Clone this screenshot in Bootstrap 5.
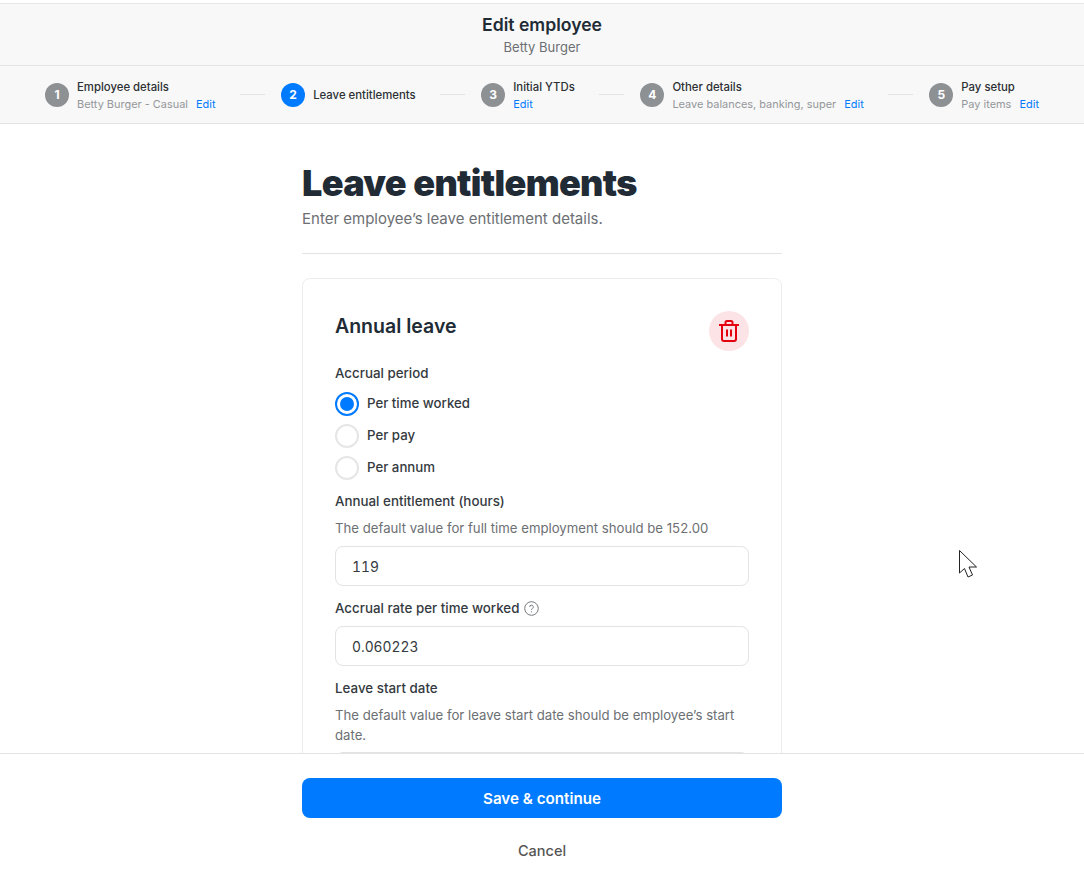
<!DOCTYPE html>
<html lang="en">
<head>
<meta charset="utf-8">
<title>Edit employee</title>
<link href="https://cdn.jsdelivr.net/npm/bootstrap@5.3.0/dist/css/bootstrap.min.css" rel="stylesheet">
<style>
html,body{height:100%;overflow:hidden}
body{font-family:Inter,"Noto Sans",sans-serif;color:#212529;background:#fff}
.shell{height:882px;padding-top:3px}
.topband{background:#f8f8f8;border-top:1px solid #e6e6e6;border-bottom:1px solid #e3e3e3;height:63px;padding-top:9px;text-align:center}
.topband h1{font-size:17.6px;font-weight:600;line-height:24px;margin:0;color:#212b35}
.topband p{font-size:13px;line-height:20px;color:#6c6f73;margin:0}
.stepbar{background:#f8f8f8;border-bottom:1px solid #e3e3e3;height:58px;padding:0 45px 0 45px}
.stepdot{width:24px;height:24px;border-radius:50%;background:#8e9194;color:#fff;font-size:12px;font-weight:700;flex:none}
.stepdot.on{background:#007bff}
.steptext{padding-top:2px}
.stepname{font-size:11.35px;line-height:17px;font-weight:500;color:#2c3034;white-space:nowrap}
.stepsub{font-size:10.95px;line-height:17px;color:#94979a;white-space:nowrap}
.stepsub a{color:#007bff;text-decoration:none;margin-left:5px}
.stepsub a.lone{margin-left:0}
.steprule{width:25px;height:1px;background:#e3e3e3;flex:none;margin-left:8px}
.scrollarea{overflow:hidden;height:629px}
.narrow{width:480px;margin:0 auto}
.pagetitle{font-size:36px;font-weight:900;line-height:44px;margin:37px 0 0;letter-spacing:-.7px;word-spacing:1px;color:#212b35}
.pagesub{font-size:15px;line-height:24px;color:#6c6f73;margin:2px 0 0}
.splitline{border-top:1px solid #e3e3e3;margin:22px 0 24px}
.leavecard{border:1px solid #ededed;border-radius:8px;padding:32px 32px 40px}
.leavecard h2{font-size:19.5px;font-weight:600;line-height:30px;margin:0;color:#212b35}
.binbtn{width:40px;height:40px;border-radius:50%;background:#fce4e6;border:0;padding:0}
.fieldlabel{font-size:13.35px;font-weight:500;line-height:20px;color:#343a40;margin:0}
.fieldlabel svg{margin-left:1px}
.hinttext{font-size:13.2px;line-height:20px;color:#6c6f73;margin:0}
.radiorow{height:24px;margin-top:8px;font-size:13.25px;font-weight:500;color:#343a40;gap:8px}
.radioring{width:24px;height:24px;border-radius:50%;border:2px solid #e6e6e6;flex:none;background:#fff}
.radioring.on{border-color:#007bff;position:relative}
.radioring.on::after{content:"";position:absolute;inset:3px;border-radius:50%;background:#007bff}
.valuebox.form-control{height:40px;border:1px solid #e3e3e3;border-radius:8px;font-size:13.8px;padding:2px 16px 0;color:#343a40;box-shadow:none;font-feature-settings:"tnum"}
.footerbar{border-top:1px solid #e3e3e3;height:129px;background:#fff;padding-top:24px}
.savebtn.btn{display:block;width:100%;height:40px;background:#007bff;border:0;border-radius:8px;font-size:15.2px;font-weight:600;color:#fff;padding:2px 0 0}
.cancelbtn.btn{display:block;width:100%;font-size:14.5px;font-weight:500;color:#555;border:0;padding:0;margin-top:21px;line-height:24px}
.cursormark{position:absolute;left:958px;top:549px;width:21px;height:29px}
.gap-a{margin-top:12px}.gap-b{margin-top:9px}.gap-c{margin-top:7px}.gap-d{margin-top:8px}.gap-e{margin-top:11px}
.date-input{margin-top:7px}
</style>
</head>
<body>
<div class="shell">
  <header class="topband">
    <h1>Edit employee</h1>
    <p>Betty Burger</p>
  </header>
  <nav class="stepbar d-flex align-items-center justify-content-between">
    <div class="d-flex align-items-center gap-2">
      <span class="stepdot d-flex align-items-center justify-content-center">1</span>
      <div class="steptext"><div class="stepname">Employee details</div><div class="stepsub">Betty Burger - Casual <a href="#">Edit</a></div></div>
    </div>
    <span class="steprule"></span>
    <div class="d-flex align-items-center gap-2">
      <span class="stepdot on d-flex align-items-center justify-content-center">2</span>
      <div class="steptext"><div class="stepname">Leave entitlements</div></div>
    </div>
    <span class="steprule"></span>
    <div class="d-flex align-items-center gap-2">
      <span class="stepdot d-flex align-items-center justify-content-center">3</span>
      <div class="steptext"><div class="stepname">Initial YTDs</div><div class="stepsub"><a class="lone" href="#">Edit</a></div></div>
    </div>
    <span class="steprule"></span>
    <div class="d-flex align-items-center gap-2">
      <span class="stepdot d-flex align-items-center justify-content-center">4</span>
      <div class="steptext"><div class="stepname">Other details</div><div class="stepsub">Leave balances, banking, super <a href="#">Edit</a></div></div>
    </div>
    <span class="steprule"></span>
    <div class="d-flex align-items-center gap-2">
      <span class="stepdot d-flex align-items-center justify-content-center">5</span>
      <div class="steptext"><div class="stepname">Pay setup</div><div class="stepsub">Pay items <a href="#">Edit</a></div></div>
    </div>
  </nav>
  <main class="scrollarea">
    <div class="narrow">
      <h2 class="pagetitle">Leave entitlements</h2>
      <p class="pagesub">Enter employee’s leave entitlement details.</p>
      <div class="splitline"></div>
      <section class="leavecard">
        <div class="d-flex justify-content-between align-items-start">
          <h2>Annual leave</h2>
          <button class="binbtn d-flex align-items-center justify-content-center" type="button" aria-label="Delete">
            <svg width="20" height="22" viewBox="0 0 20 22" fill="none" stroke="#e3000f" stroke-width="2"><path d="M0 5h20M6.500 5V2.500A1.500 1.500 0 0 1 8 1h4a1.500 1.500 0 0 1 1.500 1.500V5M3 5v14a2 2 0 0 0 2 2h10a2 2 0 0 0 2-2V5M8 9.500v7M12 9.500v7"/></svg>
          </button>
        </div>
        <p class="fieldlabel gap-a">Accrual period</p>
        <div class="radiorow d-flex align-items-center gap-b"><span class="radioring on"></span>Per time worked</div>
        <div class="radiorow d-flex align-items-center"><span class="radioring"></span>Per pay</div>
        <div class="radiorow d-flex align-items-center"><span class="radioring"></span>Per annum</div>
        <p class="fieldlabel gap-e">Annual entitlement (hours)</p>
        <p class="hinttext gap-c">The default value for full time employment should be 152.00</p>
        <input class="form-control valuebox gap-d" value="119">
        <p class="fieldlabel d-flex align-items-center gap-1 gap-a">Accrual rate per time worked
          <svg width="15" height="15" viewBox="0 0 15 15" fill="none" stroke="#75787b"><circle cx="7.500" cy="7.500" r="6.800"/><path d="M5.700 6a1.800 1.800 0 1 1 2.700 1.500c-.6.4-.9.700-.9 1.400M7.500 10.300v1"/></svg>
        </p>
        <input class="form-control valuebox gap-d" value="0.060223">
        <p class="fieldlabel gap-a">Leave start date</p>
        <p class="hinttext gap-c">The default value for leave start date should be employee’s start date.</p>
        <input class="form-control valuebox date-input" value="">
      </section>
    </div>
  </main>
  <footer class="footerbar">
    <div class="narrow">
      <button class="btn savebtn" type="button">Save &amp; continue</button>
      <button class="btn cancelbtn" type="button">Cancel</button>
    </div>
  </footer>
</div>
<svg class="cursormark" viewBox="0 0 21 29" fill="#fff" stroke="#222" stroke-width="1"><path d="M1.500 1.500v22.500l5-4.500 3.500 8.500 4.500-2-3.500-8h7.500z"/></svg>
<script src="https://cdn.jsdelivr.net/npm/bootstrap@5.3.0/dist/js/bootstrap.bundle.min.js"></script>
</body>
</html>
